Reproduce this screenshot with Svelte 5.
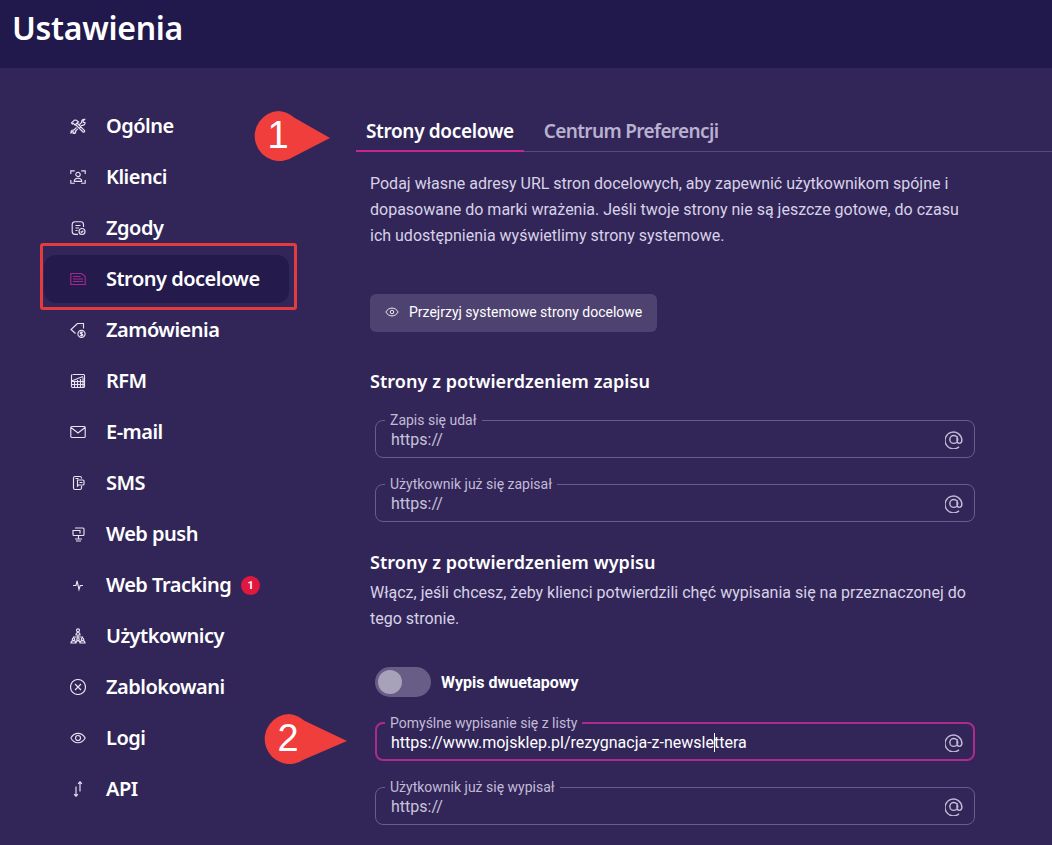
<script>
    const navItems = [
        { label: "Ogólne", icon: "M5.500 6.500 13 14a1.100 1.100 0 0 0 1.500-1.500L7 5M1.500 5 4.500 2l2 .2L8.500 4 7 5 5 7 3.500 5.500 2.500 6zM9.500 6.500l2.200-2.200a2.500 2.500 0 0 1 3-3L13 3l.4 1.400L15 4.500a2.500 2.500 0 0 1-3.200 2.800L9.600 9.500M6.500 9.500l-2.700 2.600a2.300 2.300 0 0 0-2.800 2.800l1.500-1.200 1.300.3.2 1.300-1 .7a2.300 2.300 0 0 0 2.600-3l2.200-2.100" },
        { label: "Klienci", icon: "M.8 5V1.800h4M11.200 1.800h4V5M.8 11v3.200h4M11.200 14.200h4V11M8 3.200a2.200 2.200 0 1 0 0 4.400 2.200 2.200 0 0 0 0-4.400M4.300 12.300c0-2.500 1.600-3.100 3.700-3.100s3.700.6 3.700 3.100z" },
        { label: "Zgody", icon: "M13.500 7V4.500A2.800 2.800 0 0 0 10.700 1.700H5A2.800 2.800 0 0 0 2.200 4.500V11.500A2.800 2.800 0 0 0 5 14.300h3M5.500 5.500h5M5.500 8h3.500M5.500 10.500h2M12 8.500a3 3 0 1 0 0 6 3 3 0 0 0 0-6M10.700 11.500l1 1 1.600-1.800" },
        { label: "Strony docelowe", active: true, icon: "M.8 2.500h10.700l3.700 2.800v8.200H.8zM3 5.500h7.500M3 8h10M3 10.500h10" },
        { label: "Zamówienia", icon: "M7.500 1.500 1 7.500 5.500 11.500M7.500 1.500h6V6.500M11.300 3.300v.1M11.500 8.300a3.600 3.600 0 1 0 0 7.200 3.600 3.600 0 0 0 0-7.200M12.800 10.600c-.5-.6-2.600-.7-2.600.5s2.700.6 2.700 1.800-2.200 1.100-2.800.4M11.500 9.500v4.800" },
        { label: "RFM", icon: "M3 1.500h10.500a1 1 0 0 1 1 1v11a1 1 0 0 1-1 1h-11a1 1 0 0 1-1-1v-11a1 1 0 0 1 1-1M1.500 8.500h13M1.500 11.500h13M4.500 8v6.500M7.500 7v7.500M10.500 6v8.500M13 4.500v10M1.500 8 13 3.500" },
        { label: "E-mail", icon: "M1.800 2.500h12.400a1 1 0 0 1 1 1v9a1 1 0 0 1-1 1H1.800a1 1 0 0 1-1-1v-9a1 1 0 0 1 1-1M1 3.500l7 5.500 7-5.500" },
        { label: "SMS", icon: "M11.500 3.500V3A1.500 1.500 0 0 0 10 1.500H5A1.500 1.500 0 0 0 3.500 3v10A1.500 1.500 0 0 0 5 14.500h5a1.500 1.500 0 0 0 1.500-1.500v-2M7.500 5h5.500a1 1 0 0 1 1 1v3a1 1 0 0 1-1 1H8.500l-1 1zM9.500 7.500h3M5.500 3.500h3" },
        { label: "Web push", icon: "M5 2h8a1 1 0 0 1 1 1v5.500a1 1 0 0 1-1 1H4a1 1 0 0 1-1-1V4M3 4.500h7v3M8.500 9.500v3.500M5 13h7M6 15h5" },
        { label: "Web Tracking", badge: 1, icon: "M3 8.500H6l1.100-4.500 1.900 8.500 1.200-4h2.800" },
        { label: "Użytkownicy", icon: "M8 .8a1.500 1.500 0 1 0 0 3 1.500 1.500 0 0 0 0-3M6 7c0-2 1-2.500 2-2.500s2 .5 2 2.500zM8 7v2M3.500 10v-1h9v1M3.500 10a1.200 1.200 0 1 0 0 2.400 1.200 1.200 0 0 0 0-2.400M8 10a1.200 1.200 0 1 0 0 2.400A1.200 1.200 0 0 0 8 10M12.500 10a1.200 1.200 0 1 0 0 2.400 1.200 1.200 0 0 0 0-2.400M1 15c0-1.800 1-2.400 2.500-2.400S6 13.200 6 15zM6 15c0-1.800.8-2.400 2-2.400s2 .6 2 2.400M10 15c0-1.800 1-2.400 2.500-2.400S15 13.200 15 15z" },
        { label: "Zablokowani", icon: "M8 .5a7.500 7.500 0 1 0 0 15A7.500 7.500 0 0 0 8 .5M5 5l6 6M11 5l-6 6" },
        { label: "Logi", icon: "M.8 8C2.500 5 5 3.300 8 3.300S13.500 5 15.200 8C13.500 11 11 12.700 8 12.700S2.500 11 .8 8M8 5.500a2.500 2.500 0 1 0 0 5 2.500 2.500 0 0 0 0-5" },
        { label: "API", icon: "M10 .5v10M10 .5 8.200 2.800M10 .5l1.800 2.300M6 15.500v-10M6 15.500 4.200 13.200M6 15.500l1.800-2.300" },
    ];
    const atIcon = "M14.500 16.500A7.500 7.500 0 1 1 17 10.500c0 2-1 3-2.300 3s-2-1-2-2.500V7M9.800 6.500a3.500 3.500 0 1 0 0 7 3.500 3.500 0 0 0 0-7";
</script>

<div class="page">
    <header class="top">
        <h1>Ustawienia</h1>
    </header>

    <div class="columns">
        <nav class="side">
            {#each navItems as item}
                <a class="nav-item" class:active={item.active} href="#top">
                    <svg class="nav-icon" viewBox="0 0 16 16"><path d={item.icon} /></svg>
                    <span>{item.label}</span>
                    {#if item.badge}<b class="badge">{item.badge}</b>{/if}
                </a>
            {/each}
        </nav>

        <main class="main">
            <div class="tabs">
                <button class="tab current">Strony docelowe</button>
                <button class="tab">Centrum Preferencji</button>
            </div>

            <div class="content">
                <p class="lead">
                    Podaj własne adresy URL stron docelowych, aby zapewnić użytkownikom spójne i<br />
                    dopasowane do marki wrażenia. Jeśli twoje strony nie są jeszcze gotowe, do czasu<br />
                    ich udostępnienia wyświetlimy strony systemowe.
                </p>

                <button class="preview">
                    <svg viewBox="0 0 16 16"><path d="M1 8C2.600 5.200 5 3.500 8 3.500S13.400 5.200 15 8C13.400 10.800 11 12.500 8 12.500S2.600 10.800 1 8M8 6a2 2 0 1 0 0 4 2 2 0 0 0 0-4" /></svg>
                    Przejrzyj systemowe strony docelowe
                </button>

                <h2 class="first">Strony z potwierdzeniem zapisu</h2>

                <fieldset class="field">
                    <legend>Zapis się udał</legend>
                    <div class="value">https://</div>
                    <svg class="at" viewBox="2 2.500 16 16"><path d={atIcon} /></svg>
                </fieldset>
                <fieldset class="field">
                    <legend>Użytkownik już się zapisał</legend>
                    <div class="value">https://</div>
                    <svg class="at" viewBox="2 2.500 16 16"><path d={atIcon} /></svg>
                </fieldset>

                <h2 class="second">Strony z potwierdzeniem wypisu</h2>
                <p class="sub">
                    Włącz, jeśli chcesz, żeby klienci potwierdzili chęć wypisania się na przeznaczonej do<br />
                    tego stronie.
                </p>

                <div class="switch-row">
                    <span class="switch"><i></i></span>
                    <strong>Wypis dwuetapowy</strong>
                </div>

                <fieldset class="field focused">
                    <legend>Pomyślne wypisanie się z listy</legend>
                    <div class="value">https://www.mojsklep.pl/rezygnacja-z-newsle<span class="caret"></span>ttera</div>
                    <svg class="at" viewBox="2 2.500 16 16"><path d={atIcon} /></svg>
                </fieldset>
                <fieldset class="field">
                    <legend>Użytkownik już się wypisał</legend>
                    <div class="value">https://</div>
                    <svg class="at" viewBox="2 2.500 16 16"><path d={atIcon} /></svg>
                </fieldset>
            </div>
        </main>
    </div>

    <!-- annotations drawn on top of the screenshot -->
    <div class="mark-box"></div>
    <svg class="pin pin-one" viewBox="0 0 80 54">
        <path d="M26 1a25 25 0 1 0 15 45.500l36-18.500-36-20.500A25 25 0 0 0 26 1z" />
        <text x="25" y="38">1</text>
    </svg>
    <svg class="pin pin-two" viewBox="0 0 86 54">
        <path d="M26 1a25 25 0 1 0 15 45.500l43-18.500-43-20.500A25 25 0 0 0 26 1z" />
        <text x="25" y="38">2</text>
    </svg>
</div>

<style>
    :global(body) {
        margin: 0;
        background: #322659;
    }
    .page {
        position: relative;
        height: 845px;
        overflow: hidden;
        background: #322659;
        color: #fff;
        font-family: Roboto, sans-serif;
    }

    /* HEADER */
    .top {
        height: 68px;
        padding: 0 12px;
        box-sizing: border-box;
        background: #21184b;
    }
    h1 {
        margin: 0;
        padding-top: 6px;
        font: 600 32px/44px "Noto Sans", sans-serif;
        letter-spacing: -0.3px;
    }

    .columns {
        display: flex;
    }

    /* SIDE MENU */
    .side {
        width: 245px;
        margin: 34px 67px 0 44px;
        display: flex;
        flex-direction: column;
        gap: 3px;
        flex: none;
    }
    .nav-item {
        height: 48px;
        display: flex;
        align-items: center;
        padding-left: 26px;
        border-radius: 12px;
        color: #fff;
        text-decoration: none;
        font: 600 20px/24px "Noto Sans", sans-serif;
        letter-spacing: -0.5px;
    }
    .nav-item.active {
        background: #241a4c;
    }
    .nav-icon {
        width: 16px;
        height: 16px;
        margin-right: 20px;
        flex: none;
        fill: none;
        stroke: #e8e2f2;
        stroke-width: 1.15;
    }
    .active .nav-icon {
        stroke: #a3288e;
    }
    .badge {
        width: 19px;
        height: 19px;
        margin-left: 10px;
        border-radius: 50%;
        background: #e0173f;
        font: 700 11px/19px Roboto, sans-serif;
        text-align: center;
        letter-spacing: 0;
    }

    /* TABS */
    .main {
        flex: 1;
        padding-top: 44px;
        min-width: 0;
    }
    .tabs {
        display: flex;
        gap: 10px;
        height: 40px;
        box-sizing: border-box;
        border-bottom: 1px solid #544a78;
    }
    .tab {
        height: 40px;
        padding: 0 10px;
        border: 0;
        border-bottom: 2px solid transparent;
        background: none;
        color: #b9b1cf;
        font: 600 19px/24px "Noto Sans", sans-serif;
        letter-spacing: -0.35px;
    }
    .tab + .tab {
        letter-spacing: -0.65px;
    }
    .tab.current {
        color: #fff;
        border-bottom-color: #c8248f;
    }

    /* CONTENT */
    .content {
        padding: 19px 0 0 14px;
    }
    .lead,
    .sub {
        margin: 0;
        font-size: 16px;
        line-height: 26px;
        color: #d8d2e6;
    }
    .preview {
        display: flex;
        align-items: center;
        gap: 10px;
        height: 38px;
        margin-top: 45px;
        padding: 0 15px 2px;
        border: 0;
        border-radius: 6px;
        background: #4e4370;
        color: #fff;
        font: 400 14px/16px Roboto, sans-serif;
    }
    .preview svg {
        width: 14px;
        height: 14px;
        fill: none;
        stroke: #fff;
    }
    h2 {
        margin: 0;
        font: 600 18px/26px "Noto Sans", sans-serif;
        letter-spacing: 0.05px;
    }
    h2.first {
        margin-top: 36px;
    }
    h2.second {
        margin-top: 27px;
    }
    .sub {
        margin-top: 5px;
    }

    /* URL FIELDS */
    .field {
        display: flex;
        align-items: center;
        width: 600px;
        box-sizing: border-box;
        margin: 19px 0 0 5px;
        padding: 1px 11px 5px 15px;
        min-inline-size: 0;
        border: 1px solid #675c8d;
        border-radius: 8px;
    }
    .field legend {
        margin-left: -6px;
        padding: 0 5px;
        font-size: 14px;
        line-height: 14px;
        color: #c3bbd6;
    }
    .value {
        flex: 1;
        height: 24px;
        font-size: 16px;
        line-height: 24px;
        color: #c9c3da;
        white-space: nowrap;
    }
    .at {
        width: 18px;
        height: 18px;
        fill: none;
        stroke: #c3bbd6;
        stroke-width: 1.3;
    }
    .field.focused {
        padding: 1px 10px 4px 14px;
        border: 2px solid #ae2a8c;
    }
    .field.focused .value {
        color: #fff;
    }
    .caret {
        display: inline-block;
        height: 19px;
        margin-right: -1px;
        border-left: 1px solid #fff;
        vertical-align: -4px;
    }

    /* SWITCH */
    .switch-row {
        display: flex;
        align-items: center;
        gap: 10px;
        margin: 35px 0 0 5px;
    }
    .switch {
        width: 56px;
        height: 30px;
        padding: 3px;
        box-sizing: border-box;
        border-radius: 15px;
        background: #675d86;
    }
    .switch i {
        display: block;
        width: 24px;
        height: 24px;
        border-radius: 50%;
        background: #a7a1ba;
    }
    .switch-row strong {
        font-size: 16px;
        font-weight: 700;
    }

    /* ANNOTATIONS */
    .mark-box {
        position: absolute;
        left: 40px;
        top: 243px;
        width: 257px;
        height: 67px;
        box-sizing: border-box;
        border: 3px solid #e23c3f;
        border-radius: 3px;
    }
    .pin {
        position: absolute;
        height: 54px;
    }
    .pin path {
        fill: #ef3e3c;
    }
    .pin text {
        fill: #fff;
        font: 500 38px "Liberation Sans", sans-serif;
        text-anchor: middle;
    }
    .pin-one {
        left: 253px;
        top: 110px;
        width: 80px;
    }
    .pin-two {
        left: 263px;
        top: 713px;
        width: 86px;
    }
</style>
